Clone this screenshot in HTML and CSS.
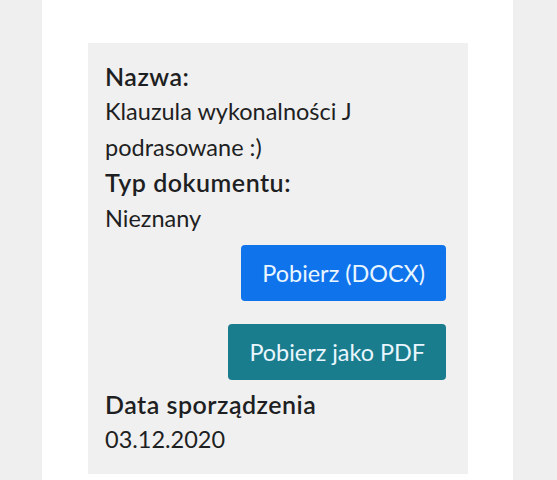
FILE: index.html
```html
<!DOCTYPE html>
<html lang="pl">
<head>
    <meta charset="UTF-8">
    <meta name="viewport" content="width=device-width, initial-scale=1.0">
    <title>Dokument</title>
    <link rel="stylesheet" href="styles.css">
</head>
<body>

    <main class="page">
        <section class="doc-card">
            <dl class="doc-info">
                <dt>Nazwa:</dt>
                <dd>Klauzula wykonalności J podrasowane :)</dd>
                <dt>Typ dokumentu:</dt>
                <dd>Nieznany</dd>
            </dl>

            <div class="doc-actions">
                <a class="btn btn-docx" href="#">Pobierz (DOCX)</a>
                <a class="btn btn-pdf" href="#">Pobierz jako PDF</a>
            </div>

            <dl class="doc-info">
                <dt>Data sporządzenia</dt>
                <dd>03.12.2020</dd>
            </dl>
        </section>
    </main>

</body>
</html>
```

FILE: styles.css
```css
:root {
    --page-bg: #efefef;
    --sheet-bg: #ffffff;
    --card-bg: #f0f0f1;
    --text-color: #1e1f22;
    --blue: #0f73ec;
    --teal: #197d8d;
    --body-font: 'Lato', 'Liberation Sans', sans-serif;
}

* { margin: 0; padding: 0; box-sizing: border-box; }

body {
    font-family: var(--body-font);
    color: var(--text-color);
    background: var(--page-bg);
    height: 480px;
    overflow: hidden;
}

/* biała kolumna strony */
.page {
    width: 471px;
    margin-left: 42px;
    min-height: 480px;
    background: var(--sheet-bg);
    padding: 43px 0 0 46px;
}

.doc-card {
    width: 380px;
    background: var(--card-bg);
    padding: 15.6px 22px 16px 17px;
}

.doc-info dt {
    font-weight: 600;
    font-size: 25px;
    line-height: 35.5px;
    letter-spacing: 0.5px;
}

.doc-info dd {
    font-size: 23.5px;
    line-height: 35.5px;
}

/* przyciski pobierania */
.doc-actions {
    display: flex;
    flex-direction: column;
    align-items: flex-end;
    gap: 23px;
    padding: 9px 0 6.6px;
}

.btn {
    display: block;
    color: #e9f6ff;
    text-decoration: none;
    font-size: 23.4px;
    line-height: 56px;
    padding: 0 21px;
    border-radius: 4px;
}

.btn-docx { background: var(--blue); }
.btn-pdf { background: var(--teal); }
```
